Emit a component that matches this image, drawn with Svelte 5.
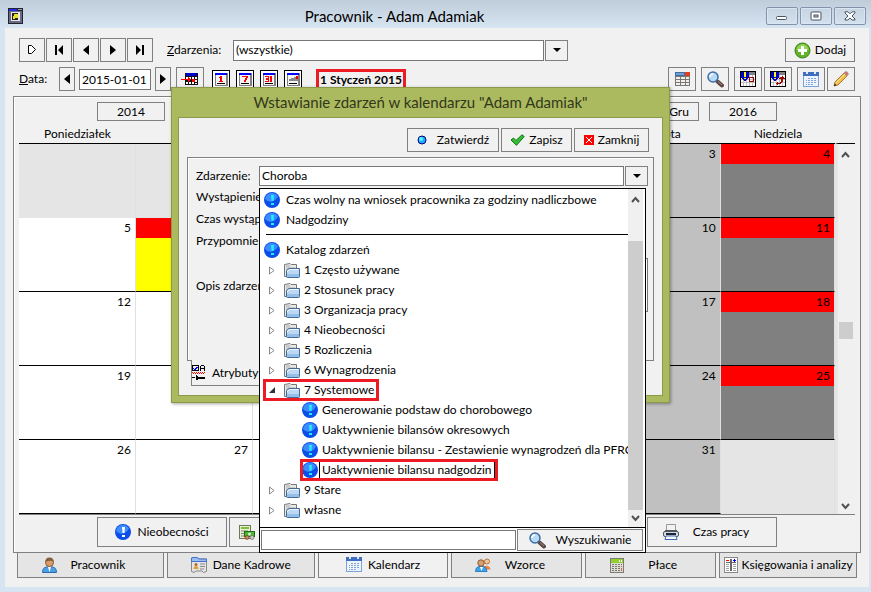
<script lang="ts">
  type Cell = { day?: number; kind?: string };

  const weekdays = ['Poniedziałek', 'Wtorek', 'Środa', 'Czwartek', 'Piątek', 'Sobota', 'Niedziela'];

  const viewIcons = [
    { icon: 'cal1', label: 'Dzień' },
    { icon: 'cal7', label: 'Tydzień' },
    { icon: 'cal31', label: 'Miesiąc' },
    { icon: 'calList', label: 'Lista' }
  ];

  const navIcons = [
    { icon: 'flag', label: 'Bieżący' },
    { icon: 'first', label: 'Pierwszy' },
    { icon: 'prev', label: 'Poprzedni' },
    { icon: 'next', label: 'Następny' },
    { icon: 'last', label: 'Ostatni' }
  ];

  const tools = [
    [{ icon: 'grid', label: 'Tabela' }],
    [{ icon: 'search', label: 'Szukaj' }],
    [{ icon: 'planDay', label: 'Plan' }, { icon: 'planMove', label: 'Przesuń plan' }],
    [{ icon: 'calendar', label: 'Kalendarz' }, { icon: 'pencil', label: 'Edytuj' }]
  ];

  const tabs = [
    { icon: 'person', label: 'Pracownik' },
    { icon: 'card', label: 'Dane Kadrowe' },
    { icon: 'calendar', label: 'Kalendarz' },
    { icon: 'people', label: 'Wzorce' },
    { icon: 'calculator', label: 'Płace' },
    { icon: 'ledger', label: 'Księgowania i analizy' }
  ];

  const recent = ['Czas wolny na wniosek pracownika za godziny nadliczbowe', 'Nadgodziny'];

  const folders = [
    { label: '1 Często używane' },
    { label: '2 Stosunek pracy' },
    { label: '3 Organizacja pracy' },
    { label: '4 Nieobecności' },
    { label: '5 Rozliczenia' },
    { label: '6 Wynagrodzenia' },
    {
      label: '7 Systemowe',
      open: true,
      items: [
        'Generowanie podstaw do chorobowego',
        'Uaktywnienie bilansów okresowych',
        'Uaktywnienie bilansu - Zestawienie wynagrodzeń dla PFRON',
        'Uaktywnienie bilansu nadgodzin'
      ]
    },
    { label: '9 Stare' },
    { label: 'własne' }
  ];

  let activeTab = $state('Kalendarz');
  let selected = $state('Uaktywnienie bilansu nadgodzin');
  let filter = $state('(wszystkie)');
  let date = $state('2015-01-01');
  let eventName = $state('Choroba');
  let query = $state('');

  // January 2015 starts on a Thursday
  const weeks: Cell[][] = Array.from({ length: 5 }, (_, w) =>
    Array.from({ length: 7 }, (_, d) => {
      const day = w * 7 + d - 2;
      if (day < 1 || day > 31) return { kind: 'out' };
      if (d === 6) return { day, kind: 'sunday' };
      if (d === 5) return { day, kind: 'saturday' };
      if (day === 6) return { day, kind: 'holiday' };
      return { day };
    })
  );
</script>

{#snippet icon(name)}
  {#if name === 'app'}
    <svg class="px" width="15" height="16" viewBox="0 0 15 16">
      <rect width="15" height="16" fill="#223" /><rect x="1" y="3" width="13" height="12" fill="#6a6a80" />
      <rect x="1" y="1" width="8" height="2" fill="#2030e0" /><rect x="10" y="1" width="4" height="1" fill="#99a" />
      <rect x="3" y="4" width="9" height="9" fill="#e8e8e8" /><rect x="4" y="5" width="6" height="7" fill="#222" />
      <rect x="6" y="6" width="4" height="4" fill="#e8e020" /><rect x="5" y="8" width="2" height="3" fill="#e8e020" />
    </svg>
  {:else if name === 'flag'}
    <svg width="10" height="10" viewBox="0 0 10 10"><path d="M1.500 .5h3l4 4-4 4h-3z" fill="#fff" stroke="#000" /></svg>
  {:else if name === 'first'}
    <svg width="10" height="10" viewBox="0 0 10 10"><path d="M1 0h2v10H1zM9 0v10L4 5z" /></svg>
  {:else if name === 'prev'}
    <svg width="6" height="10" viewBox="0 0 6 10"><path d="M6 0v10L0 5z" /></svg>
  {:else if name === 'next'}
    <svg width="6" height="10" viewBox="0 0 6 10"><path d="M0 0v10l6-5z" /></svg>
  {:else if name === 'last'}
    <svg width="10" height="10" viewBox="0 0 10 10"><path d="M7 0h2v10H7zM1 0v10l5-5z" /></svg>
  {:else if name === 'down'}
    <svg width="8" height="4" viewBox="0 0 8 4"><path d="M0 0h8L4 4z" /></svg>
  {:else if name === 'up-chevron'}
    <svg width="9" height="7" viewBox="0 0 9 7"><path d="M1 6l3.500-4L8 6" fill="none" stroke="#505050" stroke-width="2" /></svg>
  {:else if name === 'down-chevron'}
    <svg width="9" height="7" viewBox="0 0 9 7"><path d="M1 1l3.500 4L8 1" fill="none" stroke="#505050" stroke-width="2" /></svg>
  {:else if name === 'goto'}
    <svg class="px" width="18" height="14" viewBox="0 0 18 14">
      <rect x="4" y="1" width="13" height="12" fill="#111" /><rect x="5" y="1" width="11" height="3" fill="#00c" />
      <path d="M5 5h2v2H5zM8 5h2v2H8zM11 5h2v2h-2zM14 5h2v2h-2zM14 8h2v2h-2zM5 10h2v2H5zM8 10h2v2H8zM11 10h2v2h-2zM14 11h2v1h-2z" fill="#fff" />
      <path d="M0 7h7V5h1v1h1v1h1v1H9v1H8v1H7V8H0zM11 7h3v3h-3z" fill="#f00" />
    </svg>
  {:else if name === 'cal1' || name === 'cal7' || name === 'cal31' || name === 'calList'}
    <svg class="px" width="18" height="18" viewBox="0 0 18 18">
      <rect x=".5" y=".5" width="17" height="17" fill="#fff" stroke="#000" />
      <rect x="3" y="3" width="13" height="13" fill="#808080" /><rect x="3" y="3" width="12" height="2" fill="#00f" />
      <rect x="4" y="5" width="10" height="10" fill="#f4f4f4" /><rect x="5" y="13" width="8" height="1" fill="#000" />
      {#if name === 'cal1'}
        <path d="M8 6h2v5H8zM7 7h1v1H7zM7 11h4v1H7z" fill="#f00" />
      {:else if name === 'cal7'}
        <path d="M6 6h6v2h-1v2h-1v2H8v-2h1V8h1V7H6z" fill="#f00" />
      {:else if name === 'cal31'}
        <path d="M5 6h4v6H5v-1h3v-1H6V8h2V7H5zM10 6h2v6h-2z" fill="#f00" />
      {:else}
        <path d="M5 9h2V8h3V7h4v4H5z" fill="#888" /><rect x="12" y="6" width="2" height="3" fill="#f00" />
      {/if}
    </svg>
  {:else if name === 'add'}
    <svg width="17" height="17" viewBox="0 0 17 17">
      <circle cx="8.500" cy="8.500" r="7.500" fill="#61b329" stroke="#3b7d14" />
      <path d="M2.500 8a6 6 0 0 1 12 0z" fill="#8fd455" />
      <path d="M7 4h3v3h3v3h-3v3H7v-3H4V7h3z" fill="#fff" />
    </svg>
  {:else if name === 'grid'}
    <svg class="px" width="15" height="14" viewBox="0 0 15 14">
      <rect width="15" height="14" fill="#777" /><rect width="10" height="4" fill="#3f6fa8" /><rect x="1" y="1" width="8" height="2" fill="#6fa0d0" />
      <rect x="10" width="5" height="4" fill="#e0401c" />
      <path d="M1 5h4v2H1zM6 5h4v2H6zM11 5h3v2h-3zM1 8h4v2H1zM6 8h4v2H6zM11 8h3v2h-3zM1 11h4v2H1zM6 11h4v2H6zM11 11h3v2h-3z" fill="#f4efe8" />
    </svg>
  {:else if name === 'search'}
    <svg width="17" height="17" viewBox="0 0 17 17">
      <path d="M10.500 10.500l4.500 4" stroke="#5b4744" stroke-width="4" stroke-linecap="round" />
      <path d="M11 10.500l4 3.500" stroke="#a88a84" stroke-width="1" />
      <circle cx="6" cy="6" r="5" fill="#b9dcf6" stroke="#3f6da5" stroke-width="1.500" />
      <path d="M3 6a3 3 0 0 1 3-3" fill="none" stroke="#fff" stroke-width="1.500" />
    </svg>
  {:else if name === 'planDay' || name === 'planMove'}
    <svg class="px" width="16" height="16" viewBox="0 0 16 16">
      <rect width="16" height="16" fill="#000" /><rect x="1" y="1" width="14" height="14" fill="#fff" />
      <path d="M3 4h1v11H3zM6 4h1v11H6zM9 4h1v11H9zM12 4h1v11h-1zM1 8h14v1H1zM1 11h14v1H1z" fill="#c0c0c0" />
      <rect x="8" y="1" width="7" height="3" fill="#808080" /><path d="M1 1h8v6H8v1H7v1H6v1H4V9H3V8H2V7H1z" fill="#00c" />
      <rect x="4" y="1" width="2" height="5" fill="#ff0" /><rect x="4" y="7" width="2" height="1" fill="#ff0" />
      {#if name === 'planDay'}
        <path d="M9 6h5v5H9zM10 7v3h3V7z" fill="#a00000" fill-rule="evenodd" />
      {:else}
        <path d="M12 5h1v1h1v1h1v1h-2v3h-1v1h-1v1H8v1H7v-1H6v-1h1v-1h1v1h2v-1h1V8H9V7h1V6h2z" fill="#a00000" />
      {/if}
    </svg>
  {:else if name === 'calendar'}
    <svg class="px" width="16" height="15" viewBox="0 0 16 15">
      <rect width="16" height="15" fill="#7ba2db" /><rect x="1" y="4" width="14" height="10" fill="#edf4fd" />
      <rect width="16" height="4" fill="#3f6fc0" /><rect x="3" width="2" height="2" fill="#dfeaf8" /><rect x="11" width="2" height="2" fill="#dfeaf8" />
      <path d="M5 6h2v1H5zM8 6h2v1H8zM11 6h2v1h-2zM3 8h1v1H3zM5 8h2v1H5zM8 8h2v1H8zM11 8h2v1h-2zM3 10h1v1H3zM5 10h2v1H5zM8 10h2v1H8zM11 10h2v1h-2zM3 12h1v1H3zM5 12h2v1H5zM8 12h2v1H8z" fill="#84a5d8" />
    </svg>
  {:else if name === 'pencil'}
    <svg width="16" height="16" viewBox="0 0 16 16">
      <path d="M1 15l1-4 9-9 3 3-9 9z" fill="#f3bd4e" stroke="#9b6a1e" stroke-width=".8" />
      <path d="M3 12l9-9" stroke="#fde49a" /><path d="M11 2l1.500-1.500q2-.5 3 2.500L14 5z" fill="#d9756c" stroke="#8d8d8d" stroke-width=".6" />
      <path d="M1 15l.7-2.500 1.800 1.800z" fill="#222" />
    </svg>
  {:else if name === 'info' || name === 'info-light'}
    <svg width="16" height="16" viewBox="0 0 16 16">
      <circle cx="8" cy="8" r="8" fill="#0a4de8" /><path d="M1 7a7 7 0 0 1 13-2.500q-2 4-6 5T1 7z" fill="#3d8cff" />
      <path d="M7 3h3l-.5 6h-2zM7 11h3v2H7z" fill={name === 'info' ? '#1ef0ff' : '#fff'} />
    </svg>
  {:else if name === 'folder'}
    <svg width="16" height="15" viewBox="0 0 16 15">
      <path d="M.5 13.500v-12L6 .5l1 1h5.500v12z" fill="#e8e8e8" stroke="#777" />
      <path d="M2 3h4M2 5h9M2 7h3" stroke="#aaa" />
      <path d="M2.500 13.500V7.500L5 5.500h10.500v8q0 1-1 1h-11q-1 0-1-1z" fill="#bcd8f4" stroke="#456a98" />
      <path d="M3 11h12v3H3z" fill="#93bfe8" /><path d="M3.500 9V8L6 6.500h8.500" fill="none" stroke="#f0f8ff" />
    </svg>
  {:else if name === 'closed'}
    <svg width="6" height="9" viewBox="0 0 6 9"><path d="M.5 1l4.500 3.500L.5 8z" fill="#fff" stroke="#8a8a8a" /></svg>
  {:else if name === 'open'}
    <svg width="6" height="6" viewBox="0 0 6 6"><path d="M6 0v6H0z" fill="#333" /></svg>
  {:else if name === 'dot'}
    <svg width="10" height="10" viewBox="0 0 10 10">
      <circle cx="5" cy="5" r="4" fill="#1cacff" stroke="#000080" /><circle cx="4" cy="4" r="2" fill="#5ff0ff" />
    </svg>
  {:else if name === 'check'}
    <svg width="15" height="12" viewBox="0 0 15 12"><path d="M1 6l2.500-2L6 6.500 12 .8l2.200 1.700L6.500 11.300z" fill="#35c035" stroke="#0d6e12" /></svg>
  {:else if name === 'close'}
    <svg class="px" width="10" height="10" viewBox="0 0 10 10">
      <rect width="10" height="10" fill="#f00" />
      <path d="M2 2h1v1h1v1h2V3h1V2h1v1H7v1H6v2h1v1h1v1H7V7H6V6H4v1H3v1H2V7h1V6h1V4H3V3H2z" fill="#fff" />
    </svg>
  {:else if name === 'attributes'}
    <svg class="px" width="14" height="15" viewBox="0 0 14 15">
      <path d="M0 0h7v6H0zM1 1v4h5V1z" fill-rule="evenodd" /><path d="M1 3h1v1h1V3h1V2h2v1H5v1H4v1H2V4H1z" fill="#00f" />
      <path d="M8 1h1V0h3v1h1v5h-1V4H9v2H8zM9 1v2h3V1z" fill-rule="evenodd" />
      <path d="M0 7h1v1H0zM2 7h1v1H2zM4 7h1v1H4zM6 7h1v1H6zM8 7h1v1H8zM10 7h1v1h-1zM12 7h1v1h-1zM1 8h1v1H1zM3 8h1v1H3zM5 8h1v1H5zM7 8h1v1H7zM9 8h1v1H9zM11 8h1v1h-1z" fill="#f00" />
      <path d="M0 12h3v1H0zM4 10h1v1h1v1h7v2H6v1H4z" />
    </svg>
  {:else if name === 'person'}
    <svg width="15" height="16" viewBox="0 0 15 16">
      <path d="M.5 15.500q0-5 4-5.500h6q4 .5 4 5.500z" fill="#4d9fe3" stroke="#2a6cae" />
      <path d="M6 10l1.500 5L9 10z" fill="#fff" /><circle cx="7.500" cy="5.500" r="4" fill="#d99a6c" stroke="#8b5a33" />
      <path d="M3.500 5Q3 .5 7.500.5t4 4.500Q9 2.500 3.500 5z" fill="#85603f" />
    </svg>
  {:else if name === 'people'}
    <svg width="16" height="14" viewBox="0 0 16 14">
      <path d="M9 8q6-1 6.500 3.500H10z" fill="#f0803c" /><circle cx="12" cy="3.500" r="2.500" fill="#f3c79c" stroke="#b8733c" />
      <path d="M.5 13.500q0-4.500 3.500-5h4.500q3 .5 3.500 5z" fill="#3da2ea" stroke="#2a7fc4" />
      <circle cx="6" cy="5" r="3.200" fill="#d99f70" stroke="#8b5a33" /><path d="M5 9l1.500 4L8 9z" fill="#fff" />
    </svg>
  {:else if name === 'card'}
    <svg width="16" height="16" viewBox="0 0 16 16">
      <path d="M.5 14.500V1L2 .5h4L8 2h7.500v12.500l-3 1-1.500-1.500H5l-2 1.500z" fill="#e4e4e4" stroke="#888" />
      <path d="M.5 4.500V1L2 .5h4L8 2h7.500v2.500z" fill="#9cbdf4" stroke="#4470c8" />
      <circle cx="5" cy="7.500" r="1.500" fill="#b0662c" /><path d="M2.500 12q0-3 2.500-3t2.500 3z" fill="#dba03e" /><path d="M9 7h5M9 9.500h5M9 12h4" stroke="#888" />
    </svg>
  {:else if name === 'calculator'}
    <svg class="px" width="14" height="15" viewBox="0 0 14 15">
      <rect width="14" height="15" fill="#7c7c74" /><rect x="1" y="1" width="12" height="13" fill="#deded6" /><rect x="1" y="1" width="12" height="4" fill="#8fd02c" />
      <path d="M9 2h1v2H9zM11 2h1v2h-1z" fill="#fff" />
      <path d="M2 6h2v1H2zM5 6h2v1H5zM8 6h2v1H8zM11 6h1v1h-1zM2 8h2v1H2zM5 8h2v1H5zM8 8h2v1H8zM2 10h2v1H2zM5 10h2v1H5zM8 10h2v1H8zM2 12h2v1H2zM5 12h2v1H5zM8 12h2v1H8z" fill="#77776f" />
      <path d="M11 8h1v1h-1zM11 10h1v3h-1z" fill="#d55" />
    </svg>
  {:else if name === 'money'}
    <svg width="16" height="15" viewBox="0 0 16 15">
      <rect x=".5" y=".5" width="11" height="13" fill="#e8eed8" stroke="#6d7b55" /><rect x="2" y="2" width="8" height="2" fill="#7cc233" />
      <path d="M2 6h7M2 8.500h4M2 11h3" stroke="#7a8a62" />
      <rect x="5.500" y="6.500" width="10" height="5" fill="#4fb53a" stroke="#216b17" /><circle cx="10.500" cy="9" r="1.500" fill="#d4f2c0" />
      <circle cx="8" cy="12.500" r="2" fill="#d0805a" stroke="#774428" stroke-width=".7" /><circle cx="13" cy="12.500" r="2" fill="#ccc" stroke="#666" stroke-width=".7" />
    </svg>
  {:else if name === 'printer'}
    <svg width="16" height="16" viewBox="0 0 16 16">
      <path d="M3.500 7.500V.5h9v7z" fill="#f2f2f2" stroke="#999" /><rect x="2" y="6" width="12" height="3" fill="#555" />
      <rect x=".5" y="7.500" width="15" height="5" rx="1.500" fill="#d5dbe2" stroke="#4c5664" /><rect x="3" y="9" width="10" height="2" fill="#20262e" />
      <path d="M3 12h10l1 3.500H2z" fill="#fff" stroke="#3c6bb0" />
    </svg>
  {:else if name === 'ledger'}
    <svg class="px" width="14" height="16" viewBox="0 0 14 16">
      <rect width="14" height="16" fill="#888" /><rect x="1" y="1" width="12" height="14" fill="#fff" />
      <path d="M6 2h2v12H6zM2 5h10v1H2z" fill="#666" /><path d="M2 3h3v1H2z" fill="#f00" /><path d="M10 2h1v1h1v1h-1v1h-1V4H9V3h1z" fill="#00f" />
      <path d="M2 7h3v1H2zM9 7h3v1H9zM2 9h3v1H2zM9 9h3v1H9zM2 11h3v1H2zM9 11h3v1H9zM2 13h3v1H2zM9 13h3v1H9z" fill="#a0a0a0" />
    </svg>
  {:else if name === 'win-min'}
    <svg width="12" height="10" viewBox="0 0 12 10"><rect x=".5" y="5.500" width="10" height="3" rx="1" fill="#fff" stroke="#4a5362" /></svg>
  {:else if name === 'win-max'}
    <svg width="12" height="10" viewBox="0 0 12 10">
      <rect x="1" y="1" width="10" height="8" rx="1" fill="#fff" stroke="#4a5362" /><rect x="4" y="4" width="4" height="2" fill="#b8c6da" stroke="#4a5362" />
    </svg>
  {:else if name === 'win-close'}
    <svg width="12" height="10" viewBox="0 0 12 10"><path d="M1 .8h3l2 2 2-2h3v1L8 5l3 3v1H8L6 7 4 9H1V8l3-3-3-3z" fill="#fff" stroke="#4a5362" /></svg>
  {/if}
{/snippet}

{#snippet scrollbar(kind)}
  <div class="scrollbar {kind}" aria-hidden="true">
    {@render icon('up-chevron')}
    <div class="track"><div class="thumb"></div></div>
    {@render icon('down-chevron')}
  </div>
{/snippet}

<div class="window">
  <header class="titlebar">
    {@render icon('app')}
    <h1>Pracownik - Adam Adamiak</h1>
    <div class="window-buttons">
      <button aria-label="Minimalizuj">{@render icon('win-min')}</button>
      <button aria-label="Maksymalizuj">{@render icon('win-max')}</button>
      <button aria-label="Zamknij okno">{@render icon('win-close')}</button>
    </div>
  </header>

  <main>
    <div class="toolbar">
      <div class="nav">
        {#each navIcons as nav}
          <button class="btn" aria-label={nav.label}>{@render icon(nav.icon)}</button>
        {/each}
      </div>
      <label class="filter-label" for="filter"><u>Z</u>darzenia:</label>
      <div class="combo filter">
        <input id="filter" bind:value={filter} />
        <button class="btn" aria-label="Rozwiń zdarzenia">{@render icon('down')}</button>
      </div>
      <button class="btn add">{@render icon('add')}Dodaj</button>
    </div>

    <div class="toolbar second">
      <label class="date-label" for="date"><u>D</u>ata:</label>
      <div class="date">
        <button class="btn step" aria-label="Poprzedni dzień">{@render icon('prev')}</button>
        <input id="date" bind:value={date} />
        <button class="btn step" aria-label="Następny dzień">{@render icon('next')}</button>
      </div>
      <button class="btn goto" aria-label="Idź do daty">{@render icon('goto')}</button>
      <div class="views">
        {#each viewIcons as view}
          <button aria-label={view.label}>{@render icon(view.icon)}</button>
        {/each}
      </div>
      <strong class="current-date">1 Styczeń 2015</strong>
      <div class="tools">
        {#each tools as group}
          <div class="tool-group">
            {#each group as tool}
              <button class="btn" aria-label={tool.label}>{@render icon(tool.icon)}</button>
            {/each}
          </div>
        {/each}
      </div>
    </div>

    <section class="panel">
      <div class="periods">
        <button class="btn year">2014</button>
        <button class="btn month">Gru</button>
        <button class="btn year">2016</button>
      </div>

      <div class="calendar">
        <div class="calendar-grid">
          <table>
            <thead>
              <tr>
                {#each weekdays as weekday}
                  <th>{weekday}</th>
                {/each}
              </tr>
            </thead>
            <tbody>
              {#each weeks as week}
                <tr>
                  {#each week as cell}
                    <td class={cell.kind}><div class="day">{cell.day ?? ''}</div></td>
                  {/each}
                </tr>
              {/each}
            </tbody>
          </table>
        </div>
        <div class="calendar-side">
          {@render scrollbar('main')}
        </div>
      </div>

      <div class="actions">
        <button class="btn">{@render icon('info-light')}Nieobecności</button>
        <button class="btn payments" aria-label="Wypłaty">{@render icon('money')}</button>
        <button class="btn worktime">{@render icon('printer')}Czas pracy</button>
      </div>
    </section>

    <nav class="tabs">
      {#each tabs as tab}
        <button class:active={tab.label === activeTab} onclick={() => (activeTab = tab.label)}>
          {@render icon(tab.icon)}<span>{tab.label}</span>
        </button>
      {/each}
    </nav>
  </main>

  <div class="dialog" role="dialog" aria-labelledby="dialog-title">
    <h2 id="dialog-title">Wstawianie zdarzeń w kalendarzu "Adam Adamiak"</h2>
    <div class="dialog-body">
      <div class="dialog-buttons">
        <button class="btn confirm">{@render icon('dot')}Zatwierdź</button>
        <button class="btn save">{@render icon('check')}Zapisz</button>
        <button class="btn close">{@render icon('close')}Zamknij</button>
      </div>

      <div class="form">
        <label for="event">Zdarzenie:</label>
        <div class="combo">
          <input id="event" bind:value={eventName} />
          <button class="btn" aria-label="Rozwiń listę zdarzeń">{@render icon('down')}</button>

          <div class="popup">
            <div class="popup-main">
              <ul class="tree">
                {#each recent as item}
                  <li><button class="node">{@render icon('info')}<span>{item}</span></button></li>
                {/each}
                <li class="divider"></li>
                <li><button class="node">{@render icon('info')}<span>Katalog zdarzeń</span></button></li>
                {#each folders as folder}
                  <li>
                    <button class="node folder" class:marked={folder.open}>
                      <i>{@render icon(folder.open ? 'open' : 'closed')}</i>
                      {@render icon('folder')}
                      <span>{folder.label}</span>
                    </button>
                  </li>
                  {#each folder.items ?? [] as item}
                    <li>
                      <button class="node leaf" class:marked={item === selected} onclick={() => (selected = item)}>
                        {@render icon('info')}<span>{item}</span>
                      </button>
                    </li>
                  {/each}
                {/each}
              </ul>
              {@render scrollbar('list')}
            </div>
            <div class="popup-search">
              <input aria-label="Szukaj w katalogu" bind:value={query} />
              <button class="btn">{@render icon('search')}Wyszukiwanie</button>
            </div>
          </div>
        </div>

        <span>Wystąpienie:</span>
        <span>Czas wystąpienia:</span>
        <span>Przypomnienie:</span>
        <label class="description" for="description">Opis zdarzenia:</label>
        <textarea id="description"></textarea>
      </div>

      <button class="attributes">{@render icon('attributes')}Atrybuty</button>
    </div>
  </div>
</div>

<style>
  :global(body) {
    background: #d7e4f1;
  }

  .window {
    position: relative;
    min-height: 100vh;
    box-sizing: border-box;
    padding: 0 2px 5px 5px;
    display: flex;
    flex-direction: column;
    background: #d7e4f1;
    color: #000;
    font: 12px/16px Lato, 'Open Sans', sans-serif;
  }

  .window * {
    box-sizing: border-box;
  }

  svg {
    display: block;
    flex: none;
  }

  .px {
    shape-rendering: crispEdges;
  }

  button,
  input,
  textarea {
    margin: 0;
    padding: 0;
    font: inherit;
    color: inherit;
    border: 0;
    border-radius: 0;
    background: none;
  }

  input,
  textarea {
    min-width: 0;
    border: 1px solid #777;
    background: #fff;
    padding: 0 2px;
    outline: none;
  }

  .btn {
    display: flex;
    align-items: center;
    justify-content: center;
    gap: 4px;
    border: 1px solid #808080;
    background: #f1f1f1;
    white-space: nowrap;
  }

  .titlebar {
    display: flex;
    align-items: center;
    justify-content: space-between;
    height: 28px;
    margin: 0 -2px 0 -5px;
    padding: 4px 5px 0 8px;
    background: linear-gradient(#bfccd9, #d7e4f1);
  }

  h1 {
    margin: 0;
    font-size: 15px;
    line-height: 20px;
    font-weight: 400;
  }

  .window-buttons {
    display: flex;
    gap: 2px;
  }

  .window-buttons button {
    display: flex;
    align-items: center;
    justify-content: center;
    width: 32px;
    height: 18px;
    border: 1px solid #8493aa;
    border-radius: 2px;
    box-shadow: inset 0 0 0 1px #dbe6f2;
  }

  main {
    flex: 1;
    display: flex;
    flex-direction: column;
    padding: 10px 8px 9px;
    background: #f1f1f1;
  }

  .toolbar {
    display: flex;
    align-items: center;
    height: 24px;
    padding: 0 6px;
  }

  .second {
    margin-top: 5px;
  }

  .nav {
    display: flex;
    gap: 1px;
  }

  .nav .btn {
    width: 26px;
    height: 24px;
  }

  .filter-label {
    width: 66px;
    margin-left: 14px;
  }

  .combo {
    position: relative;
    display: flex;
    gap: 1px;
  }

  .combo > input {
    flex: 1;
  }

  .combo > .btn {
    width: 23px;
  }

  .filter {
    flex: 1;
    max-width: 335px;
    height: 21px;
  }

  .add {
    width: 70px;
    height: 24px;
    margin-left: auto;
  }

  .date-label {
    width: 40px;
  }

  .date {
    display: flex;
    align-items: center;
    gap: 4px;
  }

  .date input {
    width: 72px;
    height: 21px;
  }

  .step {
    width: 16px;
    height: 24px;
  }

  .goto {
    width: 28px;
    height: 24px;
    margin-left: 5px;
  }

  .views {
    display: flex;
    gap: 6px;
    margin-left: 8px;
  }

  .current-date {
    margin-left: 14px;
    padding: 0 1px;
    border: 3px solid #ed1c24;
    line-height: 15px;
    font-weight: 700;
    white-space: nowrap;
  }

  .tools {
    display: flex;
    gap: 5px;
    margin-left: auto;
  }

  .tool-group {
    display: flex;
    gap: 2px;
  }

  .tool-group .btn {
    width: 28px;
    height: 24px;
  }

  .panel {
    flex: 1;
    margin-top: 5px;
    padding: 5px;
    border: 1px solid #808080;
    box-shadow: inset 1px 1px #fff;
  }

  .periods {
    display: flex;
    gap: 10px;
    padding: 0 78px;
  }

  .periods .btn {
    height: 19px;
  }

  .year {
    width: 68px;
  }

  .month {
    width: 40px;
    margin-left: auto;
  }

  .calendar {
    display: flex;
    border-bottom: 1px solid #808080;
  }

  .calendar-grid {
    flex: 1;
    min-width: 0;
  }

  table {
    width: 100%;
    table-layout: fixed;
    border-collapse: separate;
    border-spacing: 0;
  }

  th {
    height: 23px;
    padding: 4px 0 0;
    border-bottom: 1px solid #000;
    font-weight: 400;
  }

  th:last-child {
    width: 14%;
  }

  td {
    height: 74px;
    padding: 0;
    vertical-align: top;
    text-align: right;
    background: #fff;
    border-right: 1px solid #e0e0e0;
    border-bottom: 1px solid #000;
  }

  .day {
    height: 20px;
    padding: 2px 4px 0 0;
  }

  .out {
    background: #e5e5e5;
    border-bottom-color: #e5e5e5;
  }

  .saturday {
    background: #c0c0c0;
  }

  .sunday {
    background: #808080;
  }

  .holiday {
    background: #ff0;
  }

  .sunday .day,
  .holiday .day {
    background: #f00;
  }

  .calendar-side {
    display: flex;
    width: 20px;
    padding-top: 22px;
  }

  .scrollbar {
    display: flex;
    flex-direction: column;
    align-items: center;
    background: #f0f0f0;
  }

  .track {
    flex: 1;
    width: 100%;
    display: flex;
    flex-direction: column;
  }

  .thumb {
    background: #cdcdcd;
  }

  .main {
    flex: 1;
    padding: 7px 2px 4px 0;
    border-top: 1px solid #000;
    border-left: 3px solid #e5e5e5;
  }

  .main .track {
    padding: 0 0 164px 1px;
  }

  .main .thumb {
    width: 14px;
    height: 17px;
    margin-top: auto;
  }

  .actions {
    display: flex;
    gap: 2px;
    padding: 2px 78px 0;
  }

  .actions .btn {
    width: 130px;
    height: 30px;
    gap: 6px;
  }

  .actions .payments {
    justify-content: flex-start;
    padding-left: 9px;
  }

  .actions .worktime {
    margin-left: auto;
    gap: 14px;
    padding-right: 12px;
  }

  .tabs {
    display: grid;
    grid-template-columns: 147fr 148fr 131fr 131fr 131fr 138fr;
    gap: 3px;
    padding: 0 4px;
  }

  .tabs button {
    display: flex;
    align-items: center;
    justify-content: center;
    gap: 6px;
    height: 25px;
    border: 1px solid #808080;
    border-top: 0;
    background: #e5e5e5;
    white-space: nowrap;
  }

  .tabs button:first-child,
  .tabs button:nth-child(4) {
    gap: 14px;
    padding-right: 14px;
  }

  .tabs button:nth-child(5) {
    gap: 24px;
    padding-right: 14px;
  }

  .tabs button:last-child {
    gap: 4px;
  }

  .tabs .active {
    height: 26px;
    margin-top: -1px;
    background: #f1f1f1;
  }

  .dialog {
    position: absolute;
    left: 171px;
    top: 87px;
    width: 499px;
    padding: 0 6px 6px;
    border: 1px solid #8c994a;
    background: #abba5f;
    box-shadow: 1px 1px 3px rgba(0, 0, 0, 0.35);
  }

  h2 {
    margin: 0;
    font-size: 15px;
    line-height: 29px;
    font-weight: 400;
    text-align: center;
    color: #33371c;
  }

  .dialog-body {
    padding: 10px 8px 9px;
    border: 1px solid #8c994a;
    background: #f1f1f1;
  }

  .dialog-buttons {
    display: flex;
    justify-content: flex-end;
    gap: 2px;
    padding-right: 5px;
  }

  .dialog-buttons .btn {
    height: 24px;
  }

  .dialog-buttons .confirm {
    width: 92px;
    gap: 10px;
  }

  .dialog-buttons .save {
    width: 71px;
  }

  .dialog-buttons .close {
    width: 75px;
  }

  .form {
    display: grid;
    grid-template-columns: 63px 1fr;
    grid-template-rows: 20px repeat(3, 22px) 54px;
    align-items: center;
    height: 204px;
    margin-top: 5px;
    padding: 8px 5px 0 8px;
    border: 1px solid #808080;
    box-shadow: inset 1px 1px #fff;
    white-space: nowrap;
  }

  .form > label,
  .form > span {
    grid-column: 1;
  }

  .form .combo {
    grid-column: 2;
    height: 20px;
  }

  .form textarea {
    grid-row: 5;
    grid-column: 2;
    height: 54px;
    margin-top: 12px;
    resize: none;
  }

  .form .description {
    margin-top: 14px;
  }

  .attributes {
    display: flex;
    align-items: center;
    gap: 6px;
    width: 131px;
    height: 26px;
    margin: -1px 0 0 4px;
    border: 1px solid #808080;
    border-top: 0;
    background: #f1f1f1;
  }

  .popup {
    position: absolute;
    z-index: 2;
    top: 22px;
    left: 0;
    right: 2px;
    border: 1px solid #000;
    background: #fff;
  }

  .popup-main {
    display: flex;
    padding-right: 2px;
    border-bottom: 1px solid #000;
  }

  .tree {
    flex: 1;
    min-width: 0;
    margin: 0;
    padding: 1px 0 7px;
    list-style: none;
    overflow: hidden;
  }

  .tree li {
    height: 20px;
  }

  .tree .divider {
    height: 10px;
    padding-top: 4px;
    margin-left: 6px;
  }

  .divider::before {
    content: '';
    display: block;
    border-top: 1px solid #000;
  }

  .node {
    display: flex;
    align-items: center;
    height: 20px;
    margin-left: 4px;
    white-space: nowrap;
  }

  .node span {
    padding: 0 2px 0 6px;
  }

  .folder i {
    display: flex;
    width: 20px;
    padding-left: 5px;
  }

  .folder span {
    padding-left: 4px;
  }

  .leaf {
    margin-left: 41px;
    padding-left: 1px;
  }

  .leaf span {
    padding-left: 4px;
  }

  .marked {
    position: relative;
    outline: 3px solid #ed1c24;
    outline-offset: -2px;
  }

  .folder.marked {
    padding-right: 2px;
  }

  .leaf.marked {
    padding-right: 2px;
  }

  .leaf.marked span {
    margin-left: 1px;
    padding-left: 2px;
    border: solid #000;
    border-width: 0 1px;
  }

  .list {
    width: 15px;
    padding: 7px 0 5px;
  }

  .list .track {
    padding: 38px 0 5px;
  }

  .list .thumb {
    flex: 1;
  }

  .popup-search {
    display: flex;
    align-items: center;
    gap: 1px;
    padding: 1px 2px 1px 1px;
  }

  .popup-search input {
    flex: 1;
    height: 20px;
  }

  .popup-search .btn {
    width: 126px;
    height: 22px;
    gap: 10px;
  }
</style>
